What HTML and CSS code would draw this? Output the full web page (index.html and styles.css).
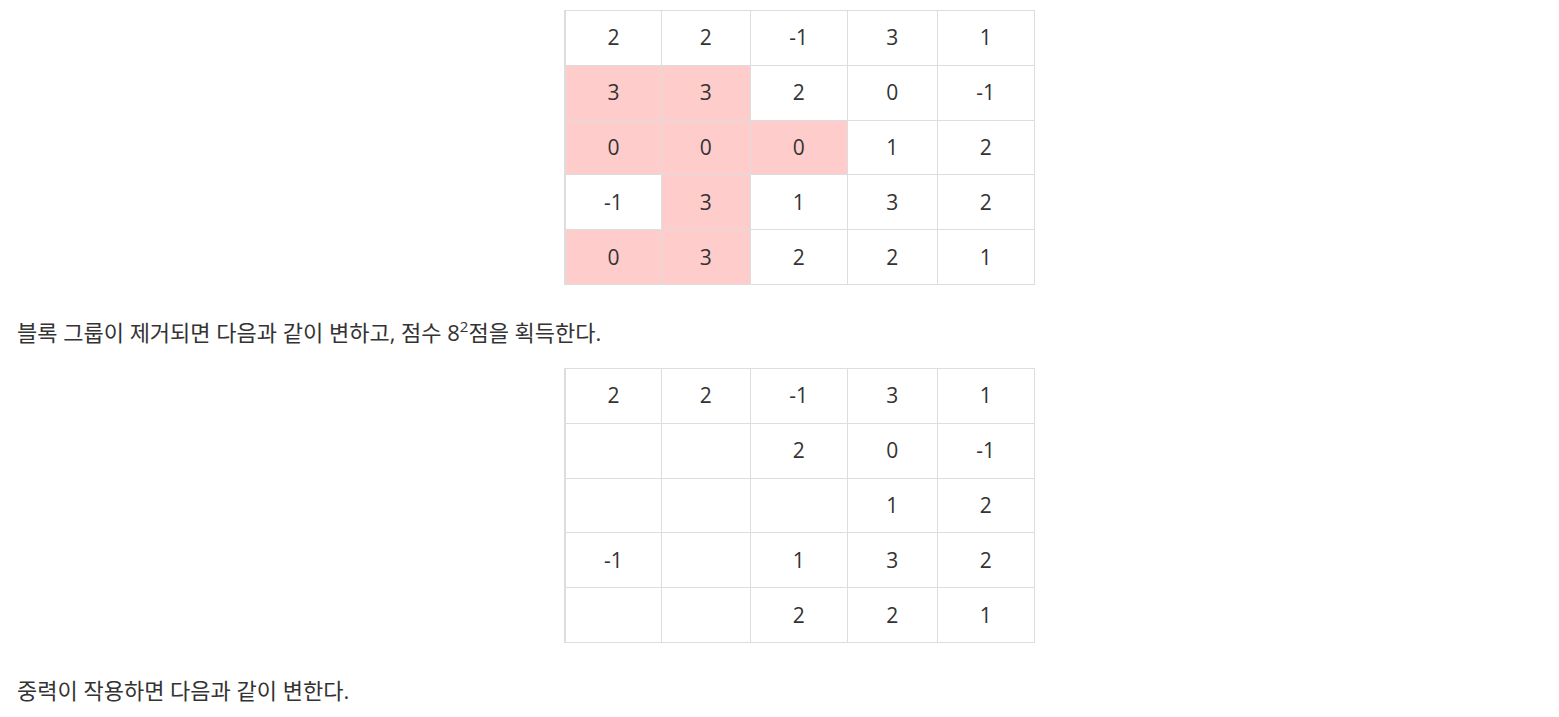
FILE: index.html
```html
<!DOCTYPE html>
<html lang="ko">
<head>
<meta charset="utf-8">
<link rel="stylesheet" href="styles.css">
</head>
<body>
<div class="problem">
  <div class="grid-wrap">
    <table class="grid">
      <colgroup><col class="c1"><col class="c2"><col class="c3"><col class="c4"><col class="c5"></colgroup>
      <tr><td>2</td><td>2</td><td>-1</td><td>3</td><td>1</td></tr>
      <tr><td class="hl">3</td><td class="hl">3</td><td>2</td><td>0</td><td>-1</td></tr>
      <tr><td class="hl">0</td><td class="hl">0</td><td class="hl">0</td><td>1</td><td>2</td></tr>
      <tr><td>-1</td><td class="hl">3</td><td>1</td><td>3</td><td>2</td></tr>
      <tr><td class="hl">0</td><td class="hl">3</td><td>2</td><td>2</td><td>1</td></tr>
    </table>
  </div>
  <p class="text">블록 그룹이 제거되면 다음과 같이 변하고, 점수 8<sup>2</sup>점을 획득한다.</p>
  <div class="grid-wrap">
    <table class="grid">
      <colgroup><col class="c1"><col class="c2"><col class="c3"><col class="c4"><col class="c5"></colgroup>
      <tr><td>2</td><td>2</td><td>-1</td><td>3</td><td>1</td></tr>
      <tr><td></td><td></td><td>2</td><td>0</td><td>-1</td></tr>
      <tr><td></td><td></td><td></td><td>1</td><td>2</td></tr>
      <tr><td>-1</td><td></td><td>1</td><td>3</td><td>2</td></tr>
      <tr><td></td><td></td><td>2</td><td>2</td><td>1</td></tr>
    </table>
  </div>
  <p class="text">중력이 작용하면 다음과 같이 변한다.</p>
</div>
</body>
</html>
```

FILE: styles.css
```css
html, body {
  margin: 0;
  padding: 0;
  background: #fff;
  overflow: hidden;
}
body {
  font-family: "Open Sans", "Noto Sans CJK KR", sans-serif;
  color: #333;
  font-size: 21px;
}
.problem {
  padding: 10px 0 0 17px;
}
.grid-wrap {
  display: flex;
  justify-content: center;
  padding-left: 23px;
}
.grid {
  border-collapse: collapse;
  table-layout: fixed;
  width: 469px;
  border-left: 2px solid #ddd;
}
.grid .c1 { width: 96px; }
.grid .c2 { width: 89px; }
.grid .c3 { width: 97px; }
.grid .c4 { width: 90px; }
.grid .c5 { width: 97px; }
.grid td {
  border: 1px solid #ddd;
  height: 53.8px;
  padding: 0;
  text-align: center;
  vertical-align: middle;
  font-size: 21px;
  line-height: 1;
}
.grid td.hl {
  background: #ffcccc;
}
.text {
  margin: 32px 0 21px;
  line-height: 30px;
  font-size: 22px;
}
.text sup {
  font-size: 15px;
  line-height: 0;
  vertical-align: 9px;
}
```
